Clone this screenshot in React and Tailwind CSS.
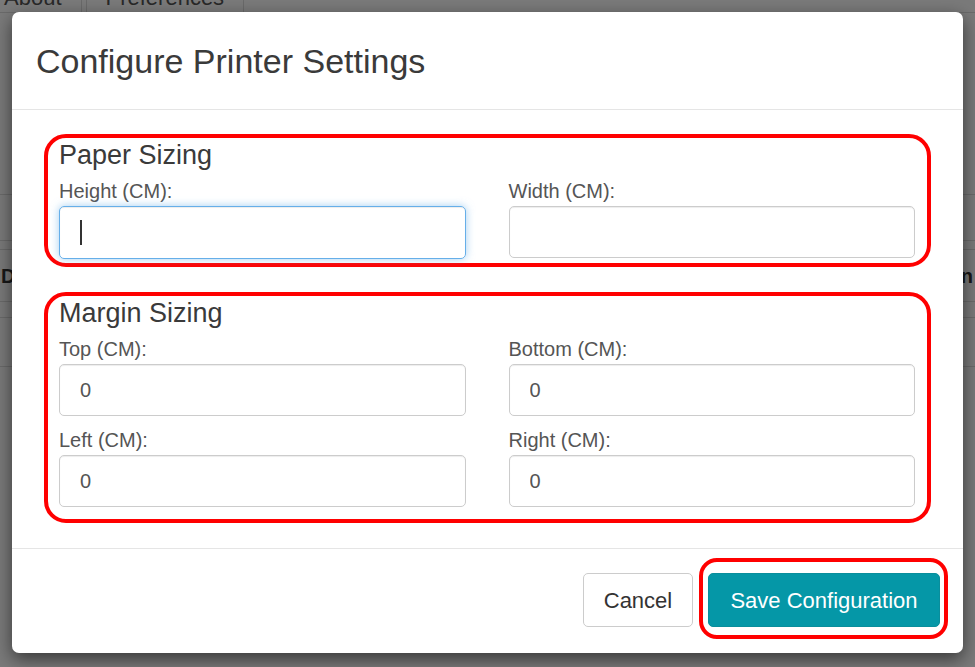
export default function App() {
  return (
    <div className="relative h-[667px] w-full overflow-hidden bg-white font-['Liberation_Sans',Arial,sans-serif] text-[#333]">
      {/* page behind the dialog */}
      <div className="flex flex-col">
        <div className="-mt-[20px] -ml-[16px] flex h-[33px] items-end gap-[4px] border-b border-[#ddd]">
          <div className="h-full rounded-t-[5px] border border-b-0 border-[#ddd] px-[19px] pt-[5px] text-[22px] leading-[24px] text-[#555]">
            About
          </div>
          <div className="h-full rounded-t-[5px] border border-b-0 border-[#ddd] px-[19px] pt-[5px] text-[22px] leading-[24px] text-[#555]">
            Preferences
          </div>
        </div>
        <div className="h-[182px] border-b border-[#ddd]" />
        <div className="h-[46px] border-b border-[#ddd]" />
        <div className="h-[9px] border-b border-[#ddd]" />
        <div className="flex h-[52px] items-center justify-between border-b border-[#ddd] pl-[1px] pr-[2px] text-[20px] font-bold">
          <span>Description</span>
          <span>Action</span>
        </div>
        <div className="h-[16px] border-b border-[#ddd]" />
        <div className="h-[49px] border-b border-[#ddd]" />
      </div>

      {/* backdrop */}
      <div className="absolute inset-0 bg-black/[0.52]" />

      {/* dialog */}
      <div className="absolute left-[12px] top-[12px] flex w-[951px] flex-col rounded-[7px] bg-white shadow-[0_6px_18px_rgba(0,0,0,0.55)]">
        <div className="flex h-[98px] items-center border-b border-[#e5e5e5] pl-[24px]">
          <h1 className="text-[34px] leading-[40px] text-[#3a3a3a]">Configure Printer Settings</h1>
        </div>

        <div className="flex flex-col gap-[25px] px-[32px] pb-[25px] pt-[24px]">
          <Section title="Paper Sizing" bottom="pb-[4px]">
            <Field label="Height (CM):" focused />
            <Field label="Width (CM):" value="" />
          </Section>
          <Section title="Margin Sizing" bottom="pb-[12px]">
            <Field label="Top (CM):" value="0" />
            <Field label="Bottom (CM):" value="0" />
            <Field label="Left (CM):" value="0" />
            <Field label="Right (CM):" value="0" />
          </Section>
        </div>

        <div className="flex justify-end gap-[15px] border-t border-[#e5e5e5] pb-[26px] pr-[23px] pt-[24px]">
          <button className="flex h-[54px] w-[110px] items-center justify-center rounded-[5px] border border-[#ccc] bg-white text-[22px] text-[#333]">
            Cancel
          </button>
          <div className="relative">
            <button className="flex h-[54px] w-[232px] items-center justify-center rounded-[5px] border border-[#0a8e9c] bg-[#0597a7] text-[22px] text-white">
              Save Configuration
            </button>
            <div className="pointer-events-none absolute -bottom-[12px] -left-[9px] -right-[8px] -top-[15px] rounded-[18px] border-4 border-[#ff0000]" />
          </div>
        </div>
      </div>
    </div>
  );
}

function Section({ title, bottom, children }) {
  return (
    <div className={`rounded-[22px] border-4 border-[#ff0000] pl-[11px] pr-[12px] pt-[1px] ${bottom}`}>
      <h2 className="text-[27px] leading-[32px] text-[#3a3a3a]">{title}</h2>
      <div className="grid grid-cols-2 gap-x-[43px] gap-y-[4px]">{children}</div>
    </div>
  );
}

function Field({ label, value, focused }) {
  return (
    <div className="flex flex-col">
      <label className="mt-[8px] text-[20px] leading-[24px] text-[#555]">{label}</label>
      {focused ? (
        <div className="mt-[3px] flex h-[53px] items-center rounded-[5px] border border-[#66afe9] pl-[20px] shadow-[inset_0_1px_1px_rgba(0,0,0,0.075),0_0_8px_rgba(102,175,233,0.6)]">
          <span className="h-[25px] w-[1.5px] bg-[#333]" />
        </div>
      ) : (
        <input
          className="mt-[3px] h-[52px] rounded-[5px] border border-[#ccc] pl-[20px] text-[20px] text-[#555] shadow-[inset_0_1px_1px_rgba(0,0,0,0.075)] outline-none"
          defaultValue={value}
        />
      )}
    </div>
  );
}
